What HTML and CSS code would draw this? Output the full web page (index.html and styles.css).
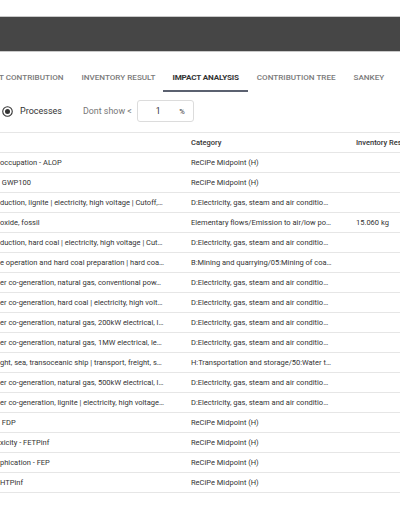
FILE: index.html
```html
<!DOCTYPE html>
<html>
<head>
<meta charset="utf-8">
<link rel="stylesheet" href="styles.css">
</head>
<body>
<div class="page">
  <div class="topbar"></div>
  <nav class="tabs">
    <span class="tab">T CONTRIBUTION</span>
    <span class="tab">INVENTORY RESULT</span>
    <span class="tab active">IMPACT ANALYSIS</span>
    <span class="tab">CONTRIBUTION TREE</span>
    <span class="tab">SANKEY</span>
  </nav>
  <div class="filters">
    <label class="radio">
      <svg width="11" height="11" viewBox="0 0 22 22"><circle cx="11" cy="11" r="9.5" fill="none" stroke="#333" stroke-width="2.2"/><circle cx="11" cy="11" r="5" fill="#333"/></svg>
      <span>Processes</span>
    </label>
    <span class="dont">Dont show &lt;</span>
    <div class="input"><span class="val">1</span><span class="pct">%</span></div>
  </div>
  <div class="table">
    <div class="row head"><div class="c1"></div><div class="c2">Category</div><div class="c3">Inventory Res</div></div>
    <div class="row"><div class="c1">occupation - ALOP</div><div class="c2">ReCiPe Midpoint (H)</div><div class="c3"></div></div>
    <div class="row"><div class="c1">&nbsp;GWP100</div><div class="c2">ReCiPe Midpoint (H)</div><div class="c3"></div></div>
    <div class="row"><div class="c1">duction, lignite | electricity, high voltage | Cutoff,…</div><div class="c2">D:Electricity, gas, steam and air conditio…</div><div class="c3"></div></div>
    <div class="row"><div class="c1">oxide, fossil</div><div class="c2">Elementary flows/Emission to air/low po…</div><div class="c3">15.060 kg</div></div>
    <div class="row"><div class="c1">duction, hard coal | electricity, high voltage | Cut…</div><div class="c2">D:Electricity, gas, steam and air conditio…</div><div class="c3"></div></div>
    <div class="row"><div class="c1">e operation and hard coal preparation | hard coa…</div><div class="c2">B:Mining and quarrying/05:Mining of coa…</div><div class="c3"></div></div>
    <div class="row"><div class="c1">er co-generation, natural gas, conventional pow…</div><div class="c2">D:Electricity, gas, steam and air conditio…</div><div class="c3"></div></div>
    <div class="row"><div class="c1">er co-generation, hard coal | electricity, high volt…</div><div class="c2">D:Electricity, gas, steam and air conditio…</div><div class="c3"></div></div>
    <div class="row"><div class="c1">er co-generation, natural gas, 200kW electrical, l…</div><div class="c2">D:Electricity, gas, steam and air conditio…</div><div class="c3"></div></div>
    <div class="row"><div class="c1">er co-generation, natural gas, 1MW electrical, le…</div><div class="c2">D:Electricity, gas, steam and air conditio…</div><div class="c3"></div></div>
    <div class="row"><div class="c1">ght, sea, transoceanic ship | transport, freight, s…</div><div class="c2">H:Transportation and storage/50:Water t…</div><div class="c3"></div></div>
    <div class="row"><div class="c1">er co-generation, natural gas, 500kW electrical, l…</div><div class="c2">D:Electricity, gas, steam and air conditio…</div><div class="c3"></div></div>
    <div class="row"><div class="c1">er co-generation, lignite | electricity, high voltage…</div><div class="c2">D:Electricity, gas, steam and air conditio…</div><div class="c3"></div></div>
    <div class="row"><div class="c1">&nbsp;FDP</div><div class="c2">ReCiPe Midpoint (H)</div><div class="c3"></div></div>
    <div class="row"><div class="c1">xicity - FETPinf</div><div class="c2">ReCiPe Midpoint (H)</div><div class="c3"></div></div>
    <div class="row"><div class="c1">phication - FEP</div><div class="c2">ReCiPe Midpoint (H)</div><div class="c3"></div></div>
    <div class="row"><div class="c1">HTPinf</div><div class="c2">ReCiPe Midpoint (H)</div><div class="c3"></div></div>
  </div>
</div>
</body>
</html>
```

FILE: styles.css
```css
* { box-sizing: border-box; }
html, body { margin: 0; padding: 0; background: #fff; }
body {
  font-family: Roboto, "Liberation Sans", sans-serif;
  color: #333;
  overflow: hidden;
  width: 400px;
  height: 516px;
}
.page { padding-top: 16px; }
.topbar {
  height: 36px;
  background: #464646;
  border-top: 1px solid #c9c9c9;
  border-bottom: 1px solid #c9c9c9;
}
.tabs {
  display: flex;
  margin-top: 10px;
  margin-left: -10px;
  white-space: nowrap;
}
.tab {
  padding: 2px 9px 0;
  height: 30px;
  line-height: 26px;
  font-size: 8.1px;
  font-weight: 500;
  color: #7a7a7a;
  border-bottom: 2px solid transparent;
}
.tab:nth-child(2) { padding-right: 8px; }
.tab.active {
  color: #333;
  font-weight: 700;
  letter-spacing: -0.15px;
  border-bottom-color: #5b6170;
}
.filters {
  display: flex;
  align-items: center;
  height: 22px;
  margin-top: 8px;
  font-size: 9px;
  color: #333;
}
.radio {
  display: flex;
  align-items: center;
  gap: 7px;
  margin-left: 2px;
}
.radio svg { display: block; }
.dont {
  margin-left: 21px;
  font-size: 8.9px;
  color: #777;
}
.input {
  margin-left: 5px;
  width: 57px;
  height: 22px;
  border: 1px solid #dcdcdc;
  border-radius: 3px;
  display: flex;
  align-items: center;
  font-size: 8.5px;
}
.input .val { margin-left: 18px; }
.input .pct { margin-left: auto; margin-right: 8px; font-size: 7.5px; }
.table {
  margin-top: 10px;
  border-top: 1px solid #e6e6e6;
}
.row {
  display: grid;
  grid-template-columns: 182px 165px 1fr;
  height: 20px;
  border-bottom: 1px solid #e6e6e6;
  font-size: 7.5px;
  color: #333;
  align-items: center;
}
.row > div {
  white-space: nowrap;
  overflow: hidden;
}
.c1 { padding-right: 9px; }
.c2, .c3 { padding-left: 9px; }
.row.head { font-weight: 500; color: #333; }
```
